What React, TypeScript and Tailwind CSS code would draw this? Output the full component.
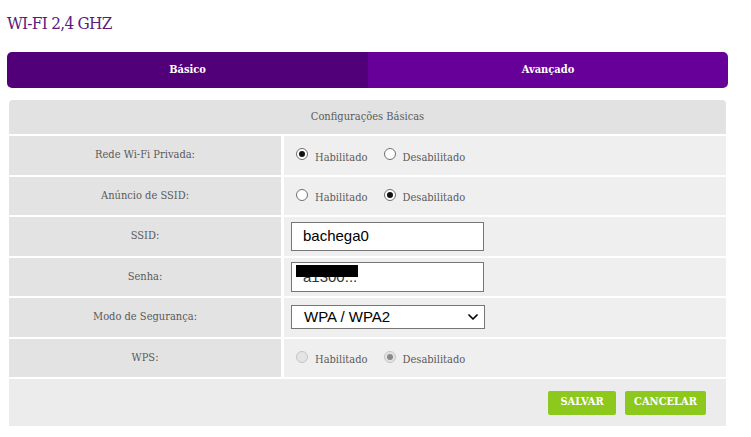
import React from 'react'
import { ChevronDown } from 'lucide-react'

const serif = { fontFamily: '"DejaVu Serif Condensed", "DejaVu Serif", "Liberation Serif", serif' }

interface RadioProps {
  label: string
  checked?: boolean
  disabled?: boolean
}

const Radio: React.FC<RadioProps> = ({ label, checked, disabled }) => {
  const ring = disabled ? 'border-[#c4c4c4] bg-[#e4e4e4]' : 'border-[#6f6f6f] bg-white'
  const dot = disabled ? 'bg-[#8a8a8a]' : 'bg-[#111]'
  return (
    <div className="flex items-center">
      <span className={`w-[12px] h-[12px] rounded-full border flex items-center justify-center -mt-[2px] ${ring}`}>
        {checked && <span className={`w-[6px] h-[6px] rounded-full ${dot}`} />}
      </span>
      <span className="ml-[7px] mt-[5px] text-[11px] text-[#5a5a5a]">{label}</span>
    </div>
  )
}

const Row: React.FC<{ label: string; children: React.ReactNode }> = ({ label, children }) => (
  <div className="flex h-[38.5px] gap-[3px]">
    <div className="w-[272px] bg-[#e3e3e3] flex items-center justify-center text-[11px] text-[#5a5a5a]">{label}</div>
    <div className="flex-1 bg-[#efeff0] flex items-center pl-[7px]">{children}</div>
  </div>
)

export default function App() {
  return (
    <div className="w-[751px] h-[437px] bg-white" style={serif}>
      <h1 className="pl-[7px] pt-[11px] text-[17px] leading-[24px] tracking-[-0.7px] text-[#5b1a7d]">WI-FI 2,4 GHZ</h1>

      {/* Tabs */}
      <div className="ml-[7px] mt-[17px] w-[721px] h-[36px] flex rounded-[5px] overflow-hidden">
        <div className="w-[361px] bg-[#52007a] flex items-center justify-center text-white text-[11px] font-semibold">Básico</div>
        <div className="flex-1 bg-[#670099] flex items-center justify-center text-white text-[11px] font-semibold">Avançado</div>
      </div>

      {/* Panel */}
      <div className="ml-[9px] mt-[12px] w-[717px] flex flex-col gap-[2px]">
        <div className="h-[34px] bg-[#e2e2e2] rounded-t-[4px] flex items-center justify-center text-[11px] text-[#5a5a5a]">
          Configurações Básicas
        </div>

        <Row label="Rede Wi-Fi Privada:">
          <div className="flex gap-[16px] pl-[5px]">
            <Radio label="Habilitado" checked />
            <Radio label="Desabilitado" />
          </div>
        </Row>

        <Row label="Anúncio de SSID:">
          <div className="flex gap-[16px] pl-[5px]">
            <Radio label="Habilitado" />
            <Radio label="Desabilitado" checked />
          </div>
        </Row>

        <Row label="SSID:">
          <div className="w-[193px] h-[29px] bg-white border border-[#767676] flex items-center pl-[11px] text-[15px] text-black" style={{ fontFamily: '"Liberation Sans", Arial, sans-serif' }}>
            bachega0
          </div>
        </Row>

        <Row label="Senha:">
          <div className="relative w-[193px] h-[30px] bg-white border border-[#767676] flex items-center pl-[11px] text-[15px] text-[#333]" style={{ fontFamily: '"Liberation Sans", Arial, sans-serif' }}>
            a1300...
            <span className="absolute left-[4px] top-[2px] w-[62px] h-[12px] bg-black" />
          </div>
        </Row>

        <Row label="Modo de Segurança:">
          <div className="w-[194px] h-[24px] bg-white border border-[#767676] flex items-center justify-between pl-[12px] pr-[3px] text-[15px] text-black" style={{ fontFamily: '"Liberation Sans", Arial, sans-serif' }}>
            <span>WPA / WPA2</span>
            <ChevronDown className="w-[16px] h-[16px]" strokeWidth={2.6} />
          </div>
        </Row>

        <Row label="WPS:">
          <div className="flex gap-[16px] pl-[5px]">
            <Radio label="Habilitado" disabled />
            <Radio label="Desabilitado" checked disabled />
          </div>
        </Row>

        <div className="h-[47px] bg-[#ececec] flex items-center justify-end pr-[20px] gap-[9px]">
          <button className="w-[68px] h-[24px] bg-[#8dc91c] rounded-[2px] text-white text-[11px] font-semibold">SALVAR</button>
          <button className="w-[81px] h-[24px] bg-[#8dc91c] rounded-[2px] text-white text-[11px] font-semibold">CANCELAR</button>
        </div>
      </div>
    </div>
  )
}
